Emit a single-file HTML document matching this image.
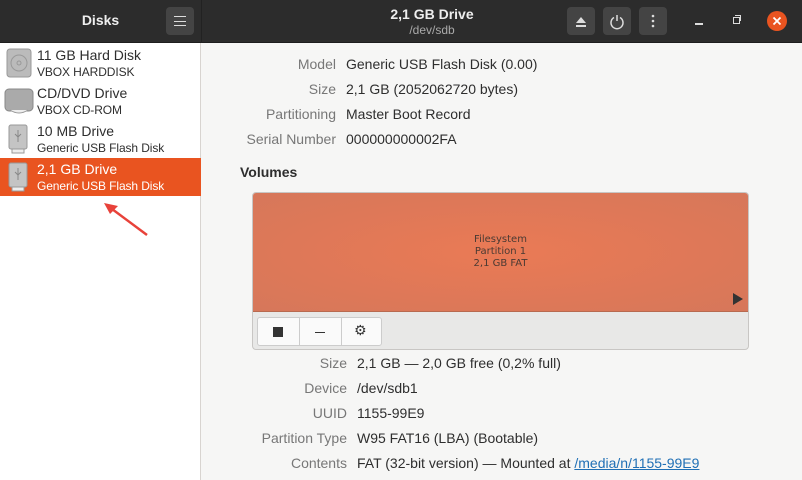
<!DOCTYPE html>
<html><head><style>
*{margin:0;padding:0;box-sizing:border-box}
body{width:802px;height:480px;overflow:hidden;font-family:"Liberation Sans","DejaVu Sans",sans-serif;background:#f6f6f5;position:relative;font-size:14px;color:#2e2e2e}
.hdr{position:absolute;left:0;top:0;width:802px;height:43px;background:#2c2c2c;border-bottom:1px solid #1e1e1e}
.hdr .sep{position:absolute;left:201px;top:0;width:1px;height:43px;background:#222}
.btn{position:absolute;top:7px;width:28px;height:28px;background:#444;border-radius:4px}
.side{position:absolute;left:0;top:43px;width:201px;height:437px;background:#fff;border-right:1px solid #d8d4d0}
.item{position:absolute;left:0;width:201px;height:38px}
.item .t{position:absolute;left:37px;top:3px;font-size:14px;color:#2e2e2e}
.item .s{position:absolute;left:37px;top:21px;font-size:12px;color:#2e2e2e;letter-spacing:-0.1px}
.sel{background:#e95420}.sel .t,.sel .s{color:#fff}
.ic{position:absolute;left:6px;top:4px}
.lab{position:absolute;text-align:right;color:#777;font-size:14px}
.val{position:absolute;font-size:14px;color:#2e2e2e}
</style></head><body>
<div class="hdr"><div class="sep"></div>
<div style="position:absolute;left:0;width:201px;top:12px;text-align:center;color:#eee;font-weight:bold;font-size:14px">Disks</div>
<div class="btn" style="left:166px"><div style="position:absolute;left:8px;top:9px;width:12px;height:10px;border-top:1.5px solid #ddd;border-bottom:1.5px solid #ddd"></div><div style="position:absolute;left:8px;top:13.5px;width:12px;height:1.5px;background:#ddd"></div></div>
<div style="position:absolute;left:202px;width:460px;top:6px;text-align:center;color:#eee;font-weight:bold;font-size:14px">2,1 GB Drive</div>
<div style="position:absolute;left:202px;width:460px;top:23px;text-align:center;color:#aaa;font-size:12px">/dev/sdb</div>
<div class="btn" style="left:567px"><svg width="28" height="28"><path d="M9 16L14 10L19 16Z M9 18H19V20H9Z" fill="#ddd"/></svg></div>
<div class="btn" style="left:603px"><svg width="28" height="28"><path d="M11 10.5A6 6 0 1 0 17 10.5" stroke="#ddd" stroke-width="1.5" fill="none"/><path d="M14 8V14" stroke="#ddd" stroke-width="1.5"/></svg></div>
<div class="btn" style="left:639px"><svg width="28" height="28"><circle cx="14" cy="9" r="1.3" fill="#ddd"/><circle cx="14" cy="14" r="1.3" fill="#ddd"/><circle cx="14" cy="19" r="1.3" fill="#ddd"/></svg></div>
<div style="position:absolute;left:695px;top:23px;width:8px;height:1.5px;background:#ddd"></div>
<div style="position:absolute;left:733px;top:17px;width:7px;height:7px;border:1.3px solid #ddd"></div>
<div style="position:absolute;left:735px;top:15px;width:6px;height:6px;border-top:1.3px solid #ddd;border-right:1.3px solid #ddd"></div>
<div style="position:absolute;left:767px;top:11px;width:20px;height:20px;border-radius:50%;background:#e95420"><svg width="20" height="20"><path d="M6.5 6.5L13.5 13.5M13.5 6.5L6.5 13.5" stroke="#fff" stroke-width="1.8"/></svg></div>
</div>
<div class="side">
<div class="item" style="top:1px"><svg class="ic" width="26" height="30"><rect x="1" y="1" width="24" height="28" rx="3" fill="#bbb" stroke="#999"/><circle cx="13" cy="15" r="8" fill="none" stroke="#999"/><circle cx="13" cy="15" r="2" fill="none" stroke="#999"/></svg><div class="t">11 GB Hard Disk</div><div class="s">VBOX HARDDISK</div></div>
<div class="item" style="top:39px"><svg class="ic" style="left:4px" width="30" height="30"><rect x="1" y="3" width="28" height="22" rx="4" fill="#aaa" stroke="#888"/><path d="M6 24Q15 30 24 24" fill="#eee" stroke="#999"/></svg><div class="t">CD/DVD Drive</div><div class="s">VBOX CD-ROM</div></div>
<div class="item" style="top:77px"><svg class="ic" width="26" height="32"><rect x="3" y="1" width="18" height="24" rx="2" fill="#c4c4c4" stroke="#999"/><rect x="6" y="25" width="12" height="4" fill="#eee" stroke="#999"/><path d="M12 6V18M9 10L12 13L15 10" stroke="#888" fill="none"/></svg><div class="t">10 MB Drive</div><div class="s">Generic USB Flash Disk</div></div>
<div class="item sel" style="top:115px"><svg class="ic" width="26" height="32"><rect x="3" y="1" width="18" height="24" rx="2" fill="#c4c4c4" stroke="#999"/><rect x="6" y="25" width="12" height="4" fill="#eee" stroke="#999"/><path d="M12 6V18M9 10L12 13L15 10" stroke="#888" fill="none"/></svg><div class="t">2,1 GB Drive</div><div class="s">Generic USB Flash Disk</div></div>
<svg style="position:absolute;left:100px;top:155px" width="60" height="45"><path d="M47 37L8 8" stroke="#e8423a" stroke-width="2.5"/><path d="M4 5L18 8L10 16Z" fill="#e8423a"/></svg>
</div>
<div class="lab" style="right:466px;top:56px">Model</div><div class="val" style="left:346px;top:56px">Generic USB Flash Disk (0.00)</div>
<div class="lab" style="right:466px;top:81px">Size</div><div class="val" style="left:346px;top:81px">2,1 GB (2052062720 bytes)</div>
<div class="lab" style="right:466px;top:106px">Partitioning</div><div class="val" style="left:346px;top:106px">Master Boot Record</div>
<div class="lab" style="right:466px;top:131px">Serial Number</div><div class="val" style="left:346px;top:131px">000000000002FA</div>
<div style="position:absolute;left:240px;top:164px;font-weight:bold;font-size:14px">Volumes</div>
<div style="position:absolute;left:252px;top:192px;width:497px;height:158px;border:1px solid #c8c6c4;border-radius:4px;background:#e8e8e7;overflow:hidden">
<div style="position:absolute;left:0;top:0;width:495px;height:119px;background:radial-gradient(ellipse at center,#ea7a55,#d6775a);border-bottom:1px solid #b86a50"></div>
<div style="position:absolute;left:0;top:41px;width:495px;text-align:center;font-size:10px;line-height:12px;color:#4a3a33;font-family:'DejaVu Sans',sans-serif">Filesystem<br>Partition 1<br>2,1 GB FAT</div>
<svg style="position:absolute;left:479px;top:99px" width="12" height="14"><path d="M1 1L11 7L1 13Z" fill="#333"/></svg>
<div style="position:absolute;left:4px;top:124px;width:125px;height:29px;background:#fafafa;border:1px solid #ccc;border-radius:3px">
<div style="position:absolute;left:41px;top:0;width:1px;height:27px;background:#ccc"></div><div style="position:absolute;left:83px;top:0;width:1px;height:27px;background:#ccc"></div>
<div style="position:absolute;left:15px;top:9px;width:10px;height:10px;background:#333"></div>
<div style="position:absolute;left:57px;top:14px;width:10px;height:1px;background:#333"></div>
<div style="position:absolute;left:96px;top:4px;font-size:14px;color:#333">⚙</div>
</div></div>
<div class="lab" style="right:455px;top:355px">Size</div><div class="val" style="left:357px;top:355px">2,1 GB — 2,0 GB free (0,2% full)</div>
<div class="lab" style="right:455px;top:380px">Device</div><div class="val" style="left:357px;top:380px">/dev/sdb1</div>
<div class="lab" style="right:455px;top:405px">UUID</div><div class="val" style="left:357px;top:405px">1155-99E9</div>
<div class="lab" style="right:455px;top:430px">Partition Type</div><div class="val" style="left:357px;top:430px">W95 FAT16 (LBA) (Bootable)</div>
<div class="lab" style="right:455px;top:455px">Contents</div><div class="val" style="left:357px;top:455px">FAT (32-bit version) — Mounted at <span style="color:#1f6fb5;text-decoration:underline">/media/n/1155-99E9</span></div>
</body></html>
